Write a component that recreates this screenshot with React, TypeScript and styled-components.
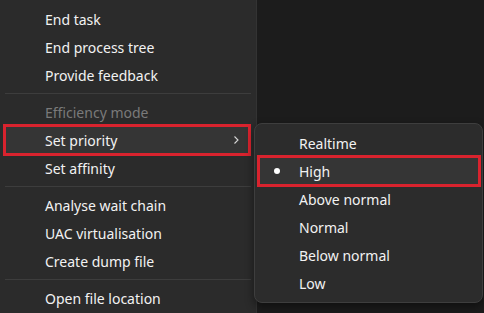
import React from "react";
import styled, { createGlobalStyle } from "styled-components";

type Entry = { label: string; disabled?: boolean; sub?: boolean; marked?: boolean } | "sep";

const mainItems: Entry[] = [
  { label: "End task" },
  { label: "End process tree" },
  { label: "Provide feedback" },
  "sep",
  { label: "Efficiency mode", disabled: true },
  { label: "Set priority", sub: true, marked: true },
  { label: "Set affinity" },
  "sep",
  { label: "Analyse wait chain" },
  { label: "UAC virtualisation" },
  { label: "Create dump file" },
  "sep",
  { label: "Open file location" },
];

const priorities = ["Realtime", "High", "Above normal", "Normal", "Below normal", "Low"];
const current = "High";

const GlobalStyle = createGlobalStyle`
  html, body {
    margin: 0;
    padding: 0;
    background: #1c1c1c;
    overflow: hidden;
  }
  body {
    font-family: "Noto Sans", "Open Sans", sans-serif;
    -webkit-font-smoothing: antialiased;
  }
`;

const Screen = styled.div`
  position: relative;
  width: 484px;
  height: 313px;
  overflow: hidden;
  background: #1c1c1c;
`;

const Menu = styled.div`
  width: 257px;
  height: 313px;
  box-sizing: border-box;
  padding-top: 5px;
  background: #2b2b2b;
  border-right: 1px solid #333333;
  display: flex;
  flex-direction: column;
`;

const Row = styled.div<{ $disabled?: boolean; $marked?: boolean }>`
  position: relative;
  height: 28px;
  flex: none;
  margin: 0 7px 0 5px;
  padding-left: 40px;
  padding-right: 9px;
  display: flex;
  align-items: center;
  border-radius: ${(p) => (p.$marked ? "0" : "4px")};
  font-size: 14px;
  color: ${(p) => (p.$disabled ? "#7a7a7a" : "#f2f2f2")};
  background: ${(p) => (p.$marked ? "#353535" : "transparent")};
  outline: ${(p) => (p.$marked ? "3px solid #d9232e" : "none")};
  outline-offset: -1px;
`;

const Label = styled.span`
  flex: 1;
  white-space: nowrap;
`;

const Separator = styled.div`
  flex: none;
  height: 1px;
  margin: 4px 5px 4px 5px;
  background: #3d3d3d;
`;

const SubMenu = styled.div`
  position: absolute;
  left: 254px;
  top: 123px;
  width: 229px;
  box-sizing: border-box;
  padding: 5px 0 5px;
  background: #2c2c2c;
  border: 1px solid #3e3e3e;
  border-radius: 8px;
  box-shadow: 0 4px 10px rgba(0, 0, 0, 0.45);
  display: flex;
  flex-direction: column;
`;

const SubRow = styled(Row)`
  margin: 0 3px 0 4px;
  padding-left: 40px;
`;

const Dot = styled.span`
  position: absolute;
  left: 15px;
  top: 50%;
  width: 6px;
  height: 6px;
  margin-top: -3px;
  border-radius: 50%;
  background: #ffffff;
`;

const Chevron = () => (
  <svg width="8" height="10" viewBox="0 0 8 10" fill="none">
    <path d="M2.5 1.5 L6 5 L2.5 8.5" stroke="#d8d8d8" strokeWidth="1.1" />
  </svg>
);

export default function App() {
  return (
    <Screen>
      <GlobalStyle />
      <Menu>
        {mainItems.map((it, i) =>
          it === "sep" ? (
            <Separator key={i} />
          ) : (
            <Row key={i} $disabled={it.disabled} $marked={it.marked}>
              <Label>{it.label}</Label>
              {it.sub && <Chevron />}
            </Row>
          )
        )}
      </Menu>
      <SubMenu>
        {priorities.map((p) => (
          <SubRow key={p} $marked={p === current}>
            {p === current && <Dot />}
            <Label>{p}</Label>
          </SubRow>
        ))}
      </SubMenu>
    </Screen>
  );
}
